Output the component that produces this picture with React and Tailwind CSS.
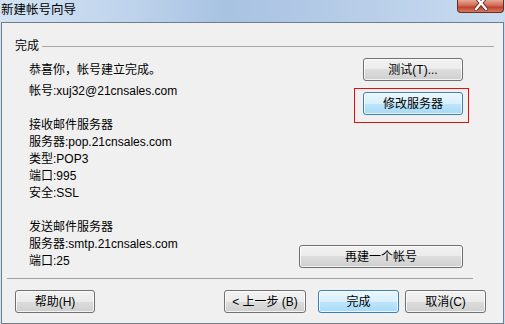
const font = { fontFamily: '"Liberation Sans", "Noto Sans CJK SC", sans-serif' };

function WinButton({ children, blue, className = "" }) {
  const skin = blue
    ? "border-[#3c7fb1] bg-[linear-gradient(#eaf6fd_0%,#d9f0fc_50%,#bee6fd_50%,#a7d9f5_100%)]"
    : "border-[#707070] bg-[linear-gradient(#f2f2f2_0%,#ebebeb_50%,#dddddd_50%,#cfcfcf_100%)]";
  return (
    <button
      className={`flex h-[23px] items-center justify-center rounded-[3px] border text-[12px] leading-none text-black shadow-[inset_0_0_0_1px_rgba(255,255,255,0.75)] ${skin} ${className}`}
    >
      {children}
    </button>
  );
}

export default function App() {
  const lines = [
    "接收邮件服务器",
    "服务器:pop.21cnsales.com",
    "类型:POP3",
    "端口:995",
    "安全:SSL",
    "",
    "发送邮件服务器",
    "服务器:smtp.21cnsales.com",
    "端口:25",
  ];

  return (
    <div
      className="flex h-[324px] w-[505px] flex-col overflow-hidden bg-[linear-gradient(90deg,#d3e3f4_0%,#bfd4ec_25%,#a8c2e2_45%,#b4cbe7_65%,#c9dcf0_100%)]"
      style={font}
    >
      {/* TITLE BAR */}
      <div className="flex h-[22px] shrink-0 items-start justify-between">
        <span className="mt-[3px] pl-[1px] text-[12.5px] leading-[15px] text-black">新建帐号向导</span>
        <div className="mr-[1px] flex h-[13px] w-[47px] items-end justify-center overflow-hidden rounded-b-[4px] border border-t-0 border-[#6e2a20] bg-[linear-gradient(#e8a797,#d26a54_45%,#bd4330_60%,#d77a5e)]">
          <svg width="14" height="12" viewBox="0 0 14 12" className="mb-[1px]">
            <path d="M2 -2 L12 10 M12 -2 L2 10" stroke="#5a2018" strokeWidth="4" strokeLinecap="square" />
            <path d="M2 -2 L12 10 M12 -2 L2 10" stroke="#ffffff" strokeWidth="2.4" strokeLinecap="square" />
          </svg>
        </div>
      </div>

      {/* PANEL */}
      <div className="mx-[1px] flex h-[302px] flex-col border border-[#6f7c8c] bg-[#f0f0f0]">
        {/* GROUP HEADER */}
        <div className="flex items-center pl-[13px] pr-[9px] pt-[16px]">
          <span className="text-[12px] leading-[14px] text-black">完成</span>
          <div className="ml-[3px] h-px flex-1 bg-[#a8a8a8]" />
        </div>

        {/* BODY */}
        <div className="mt-[5px] flex pl-[27px] pr-[40px]">
          <div className="flex-1 pt-[4px] text-[12px] leading-[17px] text-black">
            <div>恭喜你，帐号建立完成。</div>
            <div className="mt-[4px]">帐号:xuj32@21cnsales.com</div>
            <div className="h-[17px]" />
            {lines.map((t, i) => (
              <div key={i} className="h-[17px]">{t}</div>
            ))}
          </div>

          <div className="flex flex-col items-end">
            <WinButton className="w-[100px]">测试(T)...</WinButton>
            <div className="relative mt-[11px]">
              <WinButton blue className="w-[100px]">修改服务器</WinButton>
              <div className="absolute -left-[9px] -top-[4px] h-[35px] w-[115px] border border-[#e01010]" />
            </div>
            <WinButton className="mt-[130px] w-[164px]">再建一个帐号</WinButton>
          </div>
        </div>

        {/* SEPARATOR */}
        <div className="ml-[5px] mt-[8px] h-px w-[466px] bg-[#a0a0a0]" />

        {/* FOOTER */}
        <div className="mt-[11px] flex pl-[13px]">
          <WinButton className="w-[80px]">帮助(H)</WinButton>
          <WinButton className="ml-[129px] w-[82px]">&lt; 上一步 (B)</WinButton>
          <WinButton blue className="ml-[12px] w-[81px]">完成</WinButton>
          <WinButton className="ml-[6px] w-[81px]">取消(C)</WinButton>
        </div>
      </div>
    </div>
  );
}
